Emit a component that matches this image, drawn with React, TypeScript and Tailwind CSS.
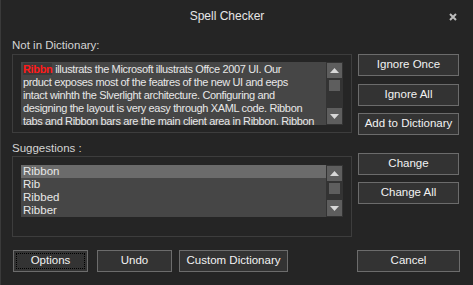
import React from 'react';

const FONT = { fontFamily: '"Liberation Sans", Arial, sans-serif' };

const Arrow = ({ down }: { down?: boolean }) => (
  <svg width="9" height="5" viewBox="0 0 9 5" className="block">
    <polygon points={down ? '0,0 9,0 4.5,5' : '0,5 9,5 4.5,0'} fill="#d8d8d8" />
  </svg>
);

const ScrollBar = () => (
  <div className="flex w-[17px] shrink-0 flex-col bg-[#333333] px-[1px] py-[1px]">
    <div className="flex h-[15px] items-center justify-center bg-[#5e5e5e]">
      <Arrow />
    </div>
    <div className="mx-[2px] mt-[2px] h-[11px] bg-[#5e5e5e]" />
    <div className="flex-1" />
    <div className="flex h-[16px] items-center justify-center bg-[#5e5e5e]">
      <Arrow down />
    </div>
  </div>
);

const Btn = ({ label, className = '', focus }: { label: string; className?: string; focus?: boolean }) => (
  <div
    className={`relative flex h-[22px] items-center justify-center border border-[#6c6c6c] bg-[#333333] text-[11.5px] text-[#f2f2f2] ${className}`}
  >
    {focus && <div className="absolute inset-[2px] border border-dotted border-black" />}
    <span>{label}</span>
  </div>
);

const textLines = [
  'illustrats the Microsoft illustrats Offce 2007 UI. Our',
  'prduct exposes most of the featres of the new UI and eeps',
  'intact winhth the Slverlight architecture. Configuring and',
  'designing the layout is very easy through XAML code. Ribbon',
  'tabs and Ribbon bars are the main client area in Ribbon. Ribbon',
];

const suggestions = ['Ribbon', 'Rib', 'Ribbed', 'Ribber'];

export default function App() {
  return (
    <div
      className="flex h-[285px] w-[473px] flex-col overflow-hidden border-l border-[#3a3a3a] bg-[#252525] text-[#d4d4d4]"
      style={FONT}
    >
      {/* title bar */}
      <div className="grid h-[30px] shrink-0 grid-cols-[1fr_auto_1fr] items-center pr-[20px]">
        <div />
        <div className="pt-[1px] text-[12px] text-[#e6e6e6]">Spell Checker</div>
        <div className="flex justify-end pt-[4px]">
          <svg width="8" height="8" viewBox="0 0 8 8" className="-mr-[4px]">
            <path d="M1 1 L7 7 M7 1 L1 7" stroke="#bdbdbd" strokeWidth="2" />
          </svg>
        </div>
      </div>

      <div className="flex pl-[11px]">
        {/* left column */}
        <div className="flex w-[340px] flex-col">
          <div className="h-[24px] pt-[8px] text-[11.5px] leading-[14px]">Not in Dictionary:</div>
          <div className="h-[79px] border border-[#3d3d3d] px-[8px] pb-[8px] pt-[7px]">
            <div className="flex h-[63px]">
              <div className="flex-1 overflow-hidden bg-[#464646] pl-[2px] pt-[1px] text-[11px] leading-[13px] tracking-[-0.35px] whitespace-nowrap text-[#e8e8e8]">
                {textLines.map((l, i) => (
                  <div key={i}>
                    {i === 0 && <span className="bg-[#3a3a3a] font-bold text-[#ff1a1a]">Ribbn</span>}
                    {i === 0 ? ' ' + l : l}
                  </div>
                ))}
              </div>
              <ScrollBar />
            </div>
          </div>

          <div className="h-[23px] pt-[8px] text-[11.5px] leading-[14px]">Suggestions :</div>
          <div className="h-[81px] border border-[#3d3d3d] px-[8px] pt-[8px]">
            <div className="flex h-[52px]">
              <div className="flex-1 bg-[#464646] text-[11.5px] leading-[13px] text-[#e8e8e8]">
                {suggestions.map((s, i) => (
                  <div key={s} className={`h-[13px] pl-[2px] ${i === 0 ? 'bg-[#6b6b6b]' : ''}`}>
                    {s}
                  </div>
                ))}
              </div>
              <ScrollBar />
            </div>
          </div>
        </div>

        {/* right column */}
        <div className="ml-[6px] flex w-[101px] flex-col pt-[24px]">
          <Btn label="Ignore Once" />
          <Btn label="Ignore All" className="mt-[8px]" />
          <Btn label="Add to Dictionary" className="mt-[7px]" />
          <Btn label="Change" className="mt-[18px]" />
          <Btn label="Change All" className="mt-[7px]" />
        </div>
      </div>

      {/* bottom buttons */}
      <div className="mt-[13px] flex pl-[12px]">
        <Btn label="Options" className="w-[75px]" focus />
        <Btn label="Undo" className="ml-[9px] w-[75px]" />
        <Btn label="Custom Dictionary" className="ml-[7px] w-[109px]" />
        <Btn label="Cancel" className="ml-[69px] w-[103px]" />
      </div>
    </div>
  );
}
